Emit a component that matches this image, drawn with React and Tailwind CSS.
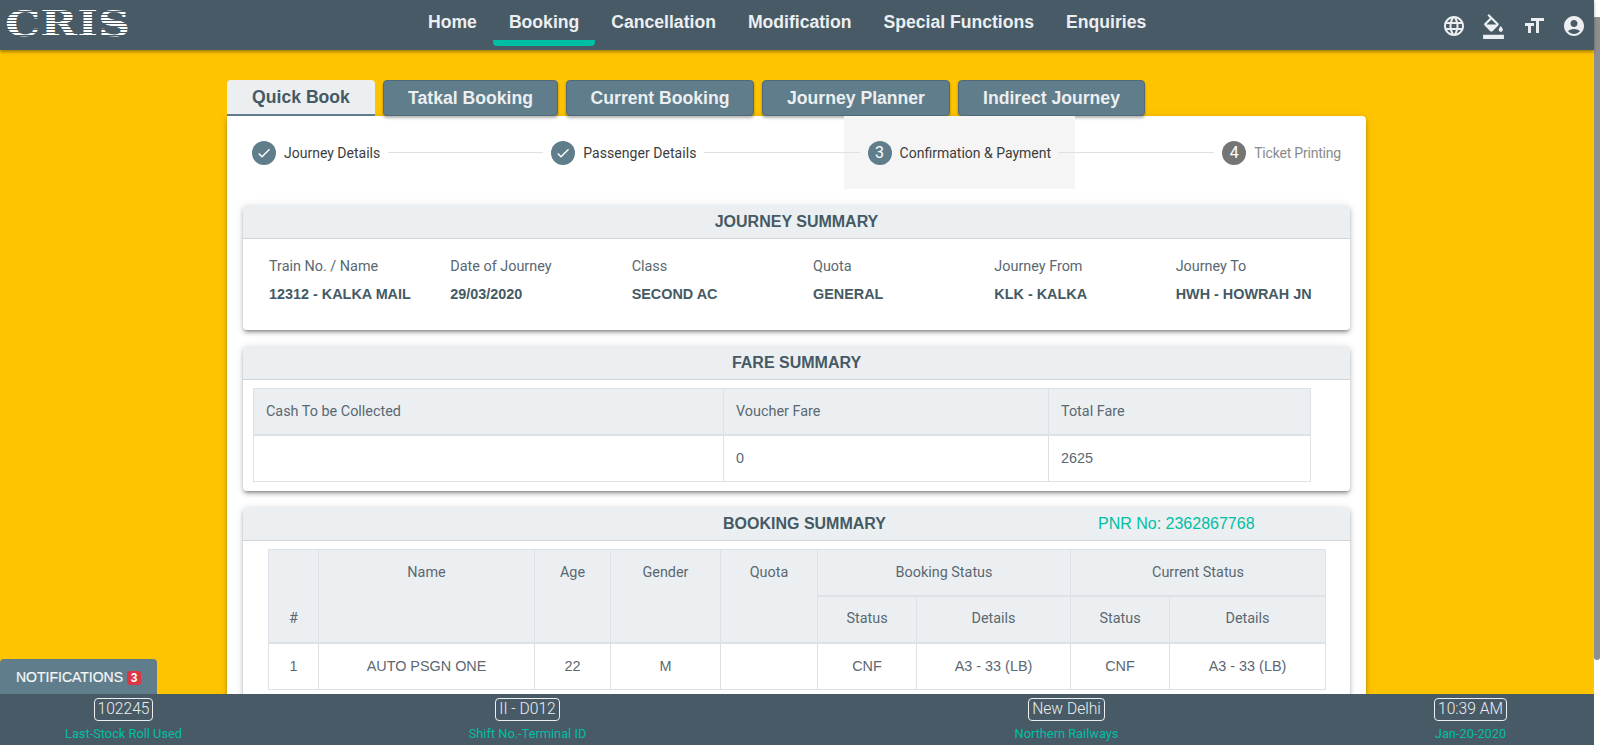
import React from 'react';
import { MdLanguage, MdFormatColorFill, MdFormatSize, MdAccountCircle, MdCheck } from 'react-icons/md';

const elevation = 'shadow-[0_3px_3px_-2px_rgba(0,0,0,0.3),0_3px_4px_0_rgba(0,0,0,0.2),0_1px_8px_0_rgba(0,0,0,0.12)]';

const navItems = ['Home', 'Booking', 'Cancellation', 'Modification', 'Special Functions', 'Enquiries'];
const tabs = [
  ['Tatkal Booking', 'w-[175px]'],
  ['Current Booking', 'w-[188px]'],
  ['Journey Planner', 'w-[188px]'],
  ['Indirect Journey', 'w-[187px]'],
];
const journey = [
  ['Train No. / Name', '12312 - KALKA MAIL'],
  ['Date of Journey', '29/03/2020'],
  ['Class', 'SECOND AC'],
  ['Quota', 'GENERAL'],
  ['Journey From', 'KLK - KALKA'],
  ['Journey To', 'HWH - HOWRAH JN'],
];

const Logo = () => (
  <svg width="134" height="48" viewBox="0 0 134 48" className="shrink-0">
    <defs>
      <pattern id="stripes" width="3" height="3" patternUnits="userSpaceOnUse">
        <rect width="3" height="2" fill="#ffffff" />
      </pattern>
    </defs>
    <text x="5" y="36" textLength="125" lengthAdjust="spacingAndGlyphs" fontFamily="'DejaVu Serif', serif" fontWeight="700" fontSize="36" fill="url(#stripes)">
      CRIS
    </text>
  </svg>
);

const Step = ({ icon, label, active, muted, labelClass = '' }) => (
  <div className={`flex items-center gap-2 h-[73px] px-6 shrink-0 ${active ? 'bg-[#f5f5f5]' : ''}`}>
    <span className={`w-6 h-6 rounded-full flex items-center justify-center text-white text-[16px] ${muted ? 'bg-[#757575]' : 'bg-[#607d8b]'}`}>
      {icon}
    </span>
    <span className={`text-sm ${labelClass} ${muted ? 'text-[#8a8a8a]' : 'text-[#3c3c3c]'}`}>{label}</span>
  </div>
);

const StepLine = () => <div className="flex-1 border-t border-[#e0e0e0] -mx-4 relative" />;

const SummaryCard = ({ children, header }) => (
  <section className={`mx-4 mb-4 bg-white rounded ${elevation}`}>
    <div className="h-[34px] bg-[#eceff1] border-b border-[#cfd4d8] rounded-t flex items-center text-base font-bold font-['Liberation_Sans',sans-serif] text-[#455a64]">
      {header}
    </div>
    {children}
  </section>
);

const Th = ({ className = '', ...props }) => (
  <th className={`border border-[#dee2e6] bg-[#eceff1] font-normal text-[14.4px] px-3 ${className}`} {...props} />
);

const Td = ({ className = '', ...props }) => (
  <td className={`border border-[#dee2e6] px-3 pt-[2px] text-[14.4px] font-['Liberation_Sans',sans-serif] ${className}`} {...props} />
);

const FooterItem = ({ value, label, className }) => (
  <div className={`flex flex-col items-center whitespace-nowrap ${className}`}>
    <span className="mt-1 h-[23px] px-[3px] flex items-center border border-[#eceff1] rounded text-[15.6px] font-light text-[#eceff1]">{value}</span>
    <span className="mt-[3px] text-[12.8px] leading-[20px] text-[#00bfa5]">{label}</span>
  </div>
);

export default function App() {
  return (
    <div className="flex h-screen overflow-hidden bg-white font-['Roboto',sans-serif]">
      <div className="relative flex-1 min-w-0 flex flex-col">
        {/* top bar */}
        <header className="relative z-10 h-[50px] shrink-0 bg-[#485a65] flex items-start shadow-[0_2px_3px_rgba(0,0,0,0.35)]">
          <Logo />
          <nav className="flex ml-[278px] font-['Liberation_Sans',sans-serif]">
            {navItems.map((item) => (
              <div
                key={item}
                className={`h-[46px] px-4 pt-[9px] text-[17.6px] leading-[26px] font-bold text-[#eceff1] rounded-b ${item === 'Booking' ? 'border-b-[6px] border-[#00bfa5]' : ''}`}
              >
                {item}
              </div>
            ))}
          </nav>
          <div className="ml-auto mr-2 mt-[14px] flex gap-4 text-[#eceff1]">
            <MdLanguage size={24} />
            <MdFormatColorFill size={25} className="-ml-px" />
            <MdFormatSize size={24} />
            <MdAccountCircle size={24} />
          </div>
        </header>

        {/* page */}
        <main className="flex-1 min-h-0 overflow-hidden bg-[#ffc400] pt-[30px] pl-[227px]">
          <div className="w-[1139px]">
            <div className="flex gap-2 h-9 text-[17.6px] font-bold font-['Liberation_Sans',sans-serif]">
              <div className="w-[148px] flex items-center justify-center bg-[#eceff1] text-[#455a64] rounded-t border-b-2 border-[#607d8b]">Quick Book</div>
              {tabs.map(([tab, width]) => (
                <div key={tab} className={`${width} flex items-center justify-center bg-[#607d8b] text-[#eceff1] border border-[#52697a] rounded shadow-[0_2px_3px_rgba(0,0,0,0.3)]`}>
                  {tab}
                </div>
              ))}
            </div>

            <div className={`bg-white rounded-b rounded-tr pb-4 ${elevation} text-[#5a6872]`}>
              <div className="flex items-center px-px mb-4">
                <Step icon={<MdCheck />} label="Journey Details" />
                <StepLine />
                <Step icon={<MdCheck />} label="Passenger Details" labelClass="tracking-[0.05px]" />
                <StepLine />
                <Step icon="3" label="Confirmation & Payment" active />
                <StepLine />
                <Step icon="4" label="Ticket Printing" muted labelClass="tracking-[-0.2px]" />
              </div>

              <SummaryCard header={<span className="w-full text-center">JOURNEY SUMMARY</span>}>
                <div className="grid grid-cols-6 pl-[11px] pr-2 pt-[17px] h-[91px]">
                  {journey.map(([label, value]) => (
                    <div key={label} className="px-[15px] whitespace-nowrap">
                      <div className="text-[14.4px] leading-[21px]">{label}</div>
                      <div className="mt-[7px] text-[14.4px] leading-[21px] font-bold font-['Liberation_Sans',sans-serif] text-[#455a64]">{value}</div>
                    </div>
                  ))}
                </div>
              </SummaryCard>

              <SummaryCard header={<span className="w-full text-center">FARE SUMMARY</span>}>
                <div className="pl-[10px] pt-2 pb-[9px]">
                  <table className="w-[1057px] table-fixed border-collapse text-left">
                    <colgroup>
                      <col className="w-[470px]" />
                      <col className="w-[325px]" />
                      <col className="w-[262px]" />
                    </colgroup>
                    <thead>
                      <tr className="h-[46px]">
                        <Th className="border-b-2 pt-[2px]">Cash To be Collected</Th>
                        <Th className="border-b-2 pt-[2px]">Voucher Fare</Th>
                        <Th className="border-b-2 pt-[2px]">Total Fare</Th>
                      </tr>
                    </thead>
                    <tbody>
                      <tr className="h-[47px]">
                        <Td />
                        <Td>0</Td>
                        <Td>2625</Td>
                      </tr>
                    </tbody>
                  </table>
                </div>
              </SummaryCard>

              <SummaryCard
                header={
                  <>
                    <span className="ml-[480px] w-[164px] whitespace-nowrap">BOOKING SUMMARY</span>
                    <span className="ml-[211px] font-normal text-[#00bfa5]">PNR No: 2362867768</span>
                  </>
                }
              >
                <div className="pl-[25px] pt-2 pb-4">
                  <table className="w-[1057px] table-fixed border-collapse text-center">
                    <colgroup>
                      <col className="w-[50px]" />
                      <col className="w-[216px]" />
                      <col className="w-[76px]" />
                      <col className="w-[110px]" />
                      <col className="w-[97px]" />
                      <col className="w-[99px]" />
                      <col className="w-[154px]" />
                      <col className="w-[99px]" />
                      <col className="w-[156px]" />
                    </colgroup>
                    <thead>
                      <tr className="h-[46px]">
                        <Th rowSpan={2} className="align-bottom pb-3 border-b-2">#</Th>
                        <Th rowSpan={2} className="align-top pt-3 border-b-2">Name</Th>
                        <Th rowSpan={2} className="align-top pt-3 border-b-2">Age</Th>
                        <Th rowSpan={2} className="align-top pt-3 border-b-2">Gender</Th>
                        <Th rowSpan={2} className="align-top pt-3 border-b-2">Quota</Th>
                        <Th colSpan={2} className="border-b-2 pt-[2px]">Booking Status</Th>
                        <Th colSpan={2} className="border-b-2 pt-[2px]">Current Status</Th>
                      </tr>
                      <tr className="h-[47px]">
                        <Th className="border-b-2">Status</Th>
                        <Th className="border-b-2">Details</Th>
                        <Th className="border-b-2">Status</Th>
                        <Th className="border-b-2">Details</Th>
                      </tr>
                    </thead>
                    <tbody>
                      <tr className="h-[47px]">
                        <Td>1</Td>
                        <Td>AUTO PSGN ONE</Td>
                        <Td>22</Td>
                        <Td>M</Td>
                        <Td />
                        <Td>CNF</Td>
                        <Td>A3 - 33 (LB)</Td>
                        <Td>CNF</Td>
                        <Td>A3 - 33 (LB)</Td>
                      </tr>
                    </tbody>
                  </table>
                </div>
              </SummaryCard>
            </div>
          </div>
        </main>

        {/* notifications tab sits over the page */}
        <div className="absolute left-0 bottom-[51px] w-[157px] h-[35px] bg-[#607d8b] rounded-t flex items-center pl-4 z-10 font-['Liberation_Sans',sans-serif]">
          <span className="mt-px text-[14px] text-[#f5f7f8] [-webkit-text-stroke:0.2px_#f5f7f8]">NOTIFICATIONS</span>
          <span className="ml-1 mt-[2px] w-[14px] h-[14px] rounded-[3px] bg-[#dc3545] text-white text-[12px] font-bold flex items-center justify-center">3</span>
        </div>

        {/* status bar */}
        <footer className="relative z-20 h-[51px] shrink-0 bg-[#485a65] flex pl-[66px]">
          <FooterItem className="w-[115px]" value="102245" label="Last-Stock Roll Used" />
          <FooterItem className="w-[119px] ml-[287px]" value="II - D012" label="Shift No.-Terminal ID" />
          <FooterItem className="w-[103px] ml-[428px]" value="New Delhi" label="Northern Railways" />
          <FooterItem className="w-[71px] ml-[317px]" value="10:39 AM" label="Jan-20-2020" />
        </footer>
      </div>

      {/* scrollbar */}
      <div className="w-[6px] shrink-0 bg-white pt-[17px]">
        <div className="h-[643px] bg-[#8f8f8f] rounded-b-[3px]" />
      </div>
    </div>
  );
}
